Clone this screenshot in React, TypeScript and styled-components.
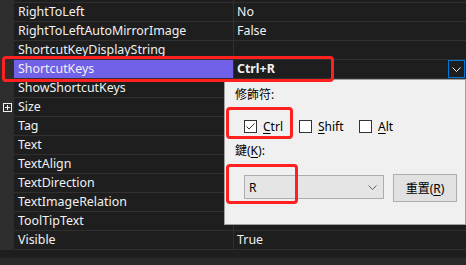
import React from 'react';
import styled, { createGlobalStyle } from 'styled-components';

const Global = createGlobalStyle`
  html, body { margin: 0; padding: 0; background: #1e1e1e; overflow: hidden; }
  body { font-family: "Noto Sans", "Noto Sans CJK TC", sans-serif; font-size: 12px; }
`;

const Page = styled.div`
  position: relative;
  width: 466px;
  height: 265px;
  background: #1e1e1e;
  display: flex;
  flex-direction: column;
  overflow: hidden;
`;

const Grid = styled.div`
  display: flex;
  flex-direction: column;
  font-size: 12.4px;
`;

const Row = styled.div<{ $h?: number }>`
  display: grid;
  grid-template-columns: 14px 219px 1px 1fr;
  height: ${p => (p.$h ?? 18) + 1}px;
`;

const Margin = styled.div`
  background: #2d2d2d;
  display: flex;
  align-items: center;
  justify-content: center;
`;

const NameCell = styled.div<{ $sel?: boolean }>`
  background: ${p => (p.$sel ? '#7160e8' : '#1e1e1e')};
  border-bottom: 1px solid #303030;
  color: #f1f1f1;
  padding-left: 4px;
  line-height: 18px;
  white-space: nowrap;
  overflow: hidden;
`;

const Sep = styled.div`
  background: #303030;
`;

const ValueCell = styled.div<{ $bold?: boolean }>`
  border-bottom: 1px solid #303030;
  color: #f1f1f1;
  padding-left: 3px;
  line-height: 18px;
  font-weight: ${p => (p.$bold ? 700 : 400)};
  display: flex;
  align-items: center;
  white-space: nowrap;
`;

const DropButton = styled.div`
  margin-left: auto;
  margin-right: 1px;
  width: 15px;
  height: 16px;
  border: 1px solid #0078d7;
  background: #1e1e1e;
  display: flex;
  align-items: center;
  justify-content: center;
`;

const Gap = styled.div`
  height: 8px;
  background: #1e1e1e;
`;

const Footer = styled.div`
  flex: 1;
  background: #2a2a2a;
`;

const Popup = styled.div`
  position: absolute;
  left: 224px;
  top: 79px;
  width: 240px;
  height: 144px;
  background: #f0f0f0;
  border: 1px solid #a0a0a0;
  display: flex;
  flex-direction: column;
  color: #000;
`;

const Label = styled.div<{ $mt: number }>`
  margin-top: ${p => p.$mt}px;
  padding-left: 10px;
  line-height: 16px;
  height: 16px;
`;

const CheckRow = styled.div`
  margin-top: 15px;
  padding-left: 19px;
  display: flex;
  align-items: center;
  height: 16px;
`;

const CheckItem = styled.div<{ $w: number }>`
  width: ${p => p.$w}px;
  display: flex;
  align-items: center;
  gap: 6px;
`;

const Box = styled.div`
  width: 11px;
  height: 11px;
  border: 1px solid #333;
  background: #fff;
  display: flex;
  align-items: center;
  justify-content: center;
`;

const U = styled.span`
  text-decoration: underline;
  text-underline-offset: 2px;
`;

const KeyRow = styled.div`
  margin-top: 15px;
  padding-left: 19px;
  display: flex;
  align-items: flex-start;
  gap: 9px;
`;

const Combo = styled.div`
  margin-top: 1px;
  height: 22px;
  width: 128px;
  border: 1px solid #adadad;
  background: #e5e5e5;
  display: flex;
  align-items: center;
  padding-left: 4px;
  padding-right: 6px;
`;

const ComboText = styled.span`
  flex: 1;
`;

const Button = styled.div`
  width: 62px;
  height: 26px;
  border: 1px solid #adadad;
  background: #e1e1e1;
  display: flex;
  align-items: center;
  justify-content: center;
`;

const Mark = styled.div<{ $l: number; $t: number; $w: number; $h: number }>`
  position: absolute;
  left: ${p => p.$l}px;
  top: ${p => p.$t}px;
  width: ${p => p.$w}px;
  height: ${p => p.$h}px;
  box-sizing: border-box;
  border: 3px solid #ff2020;
  border-radius: 4px;
  pointer-events: none;
`;

const PlusBox = () => (
  <svg width="9" height="9" viewBox="0 0 9 9">
    <rect x="0.5" y="0.5" width="8" height="8" fill="none" stroke="#f0f0f0" />
    <path d="M2 4.5H7M4.5 2V7" stroke="#f0f0f0" />
  </svg>
);

const Chevron = ({ color }: { color: string }) => (
  <svg width="9" height="5" viewBox="0 0 9 5">
    <path d="M0.5 0.5L4.5 4.5L8.5 0.5" fill="none" stroke={color} strokeWidth="1" />
  </svg>
);

const Check = () => (
  <svg width="11" height="11" viewBox="0 0 11 11">
    <path d="M1.5 5.5L4 8L9.5 2.5" fill="none" stroke="#333" strokeWidth="1" />
  </svg>
);

type Prop = { name: string; value?: string; plus?: boolean };

const rows: Prop[] = [
  { name: 'RightToLeft', value: 'No' },
  { name: 'RightToLeftAutoMirrorImage', value: 'False' },
  { name: 'ShortcutKeyDisplayString', value: '' },
  { name: '__SEL__' },
  { name: 'ShowShortcutKeys', value: '' },
  { name: 'Size', value: '', plus: true },
  { name: 'Tag', value: '' },
  { name: 'Text', value: '' },
  { name: 'TextAlign', value: '' },
  { name: 'TextDirection', value: '' },
  { name: 'TextImageRelation', value: '' },
  { name: 'ToolTipText', value: '' },
  { name: 'Visible', value: 'True' },
];

export default function App() {
  return (
    <Page>
      <Global />
      <Grid>
        <Row $h={2}>
          <Margin />
          <NameCell />
          <Sep />
          <ValueCell />
        </Row>
        {rows.map(r =>
          r.name === '__SEL__' ? (
            <Row key="sel">
              <Margin />
              <NameCell $sel>ShortcutKeys</NameCell>
              <Sep />
              <ValueCell $bold>
                Ctrl+R
                <DropButton>
                  <Chevron color="#f0f0f0" />
                </DropButton>
              </ValueCell>
            </Row>
          ) : (
            <Row key={r.name}>
              <Margin>{r.plus && <PlusBox />}</Margin>
              <NameCell>{r.name}</NameCell>
              <Sep />
              <ValueCell>{r.value}</ValueCell>
            </Row>
          )
        )}
      </Grid>
      <Gap />
      <Footer />

      <Popup>
        <Label $mt={7}>修飾符:</Label>
        <CheckRow>
          <CheckItem $w={55}>
            <Box>
              <Check />
            </Box>
            <span>
              <U>C</U>trl
            </span>
          </CheckItem>
          <CheckItem $w={60}>
            <Box />
            <span>
              <U>S</U>hift
            </span>
          </CheckItem>
          <CheckItem $w={50}>
            <Box />
            <span>
              <U>A</U>lt
            </span>
          </CheckItem>
        </CheckRow>
        <Label $mt={9}>
          鍵(<U>K</U>):
        </Label>
        <KeyRow>
          <Combo>
            <ComboText>R</ComboText>
            <Chevron color="#606060" />
          </Combo>
          <Button>
            重置(<U>R</U>)
          </Button>
        </KeyRow>
      </Popup>

      <Mark $l={2} $t={56} $w={332} $h={26} />
      <Mark $l={226} $t={107} $w={67} $h={32} />
      <Mark $l={226} $t={164} $w={72} $h={40} />
    </Page>
  );
}
